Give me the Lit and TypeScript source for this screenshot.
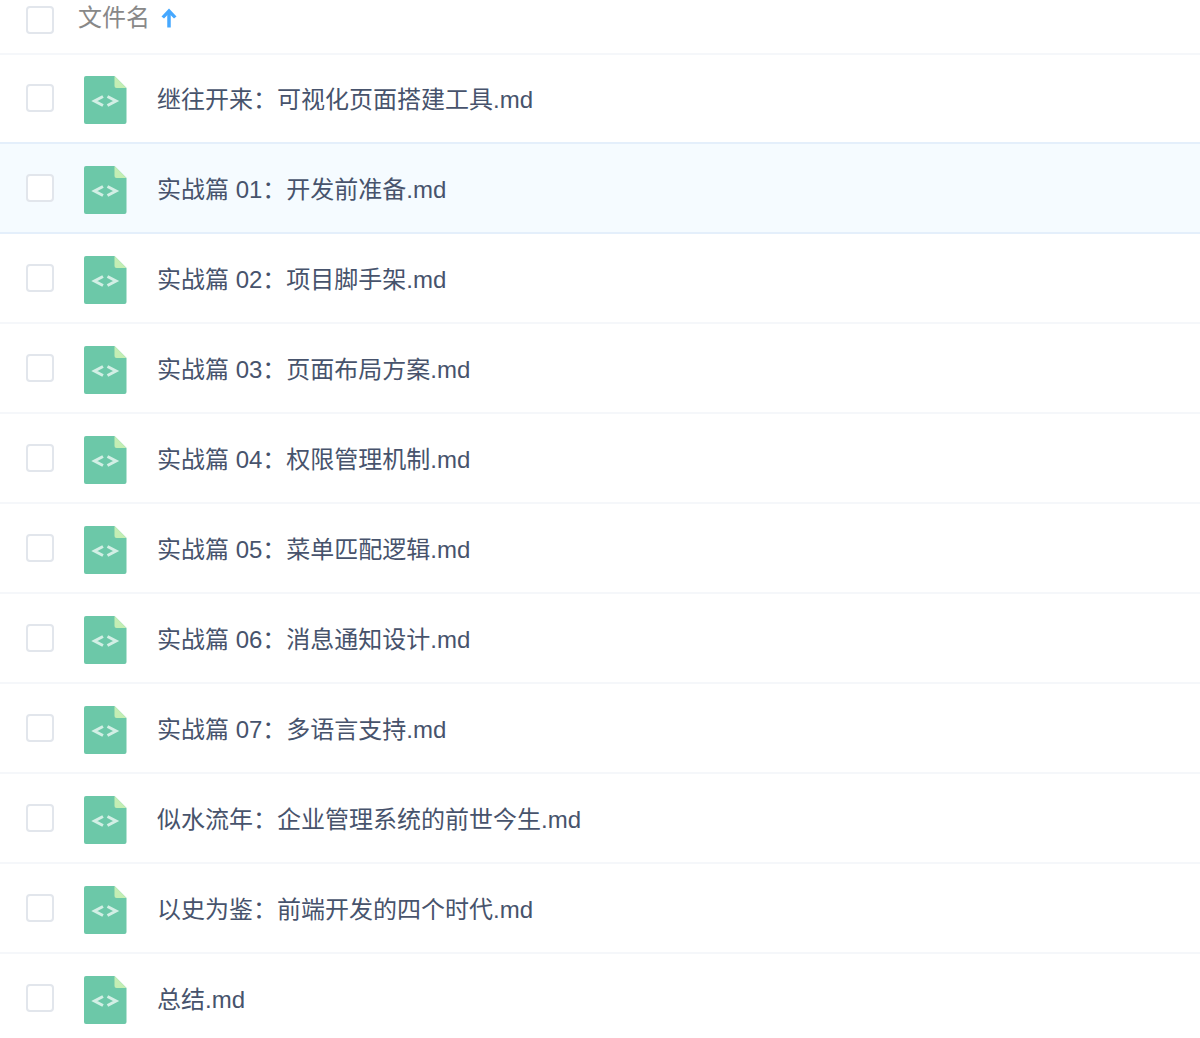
import { LitElement, html, css, svg } from "lit";
import { customElement } from "lit/decorators.js";

const FILES = [
  "继往开来：可视化页面搭建工具.md",
  "实战篇 01：开发前准备.md",
  "实战篇 02：项目脚手架.md",
  "实战篇 03：页面布局方案.md",
  "实战篇 04：权限管理机制.md",
  "实战篇 05：菜单匹配逻辑.md",
  "实战篇 06：消息通知设计.md",
  "实战篇 07：多语言支持.md",
  "似水流年：企业管理系统的前世今生.md",
  "以史为鉴：前端开发的四个时代.md",
  "总结.md",
];

const fileIcon = svg`<svg class="icon" width="43" height="48" viewBox="0 0 43 48">
  <path d="M2 0H30.500L42.500 12V46a2 2 0 0 1-2 2H2a2 2 0 0 1-2-2V2a2 2 0 0 1 2-2Z" fill="#6cc8a8"/>
  <path d="M30.500 0L42.500 12H32.500a2 2 0 0 1-2-2Z" fill="#c4eeb4"/>
  <path d="M19 20.500L10.500 25l8.500 4.500M23.500 20.500L32 25l-8.500 4.500" fill="none" stroke="#d3efe5" stroke-width="3"/>
</svg>`;

@customElement("app-root")
export class AppRoot extends LitElement {
  static styles = css`
    :host {
      display: block;
      width: 1200px;
      height: 1038px;
      overflow: hidden;
      background: #fff;
      font-family: "Liberation Sans", "Noto Sans CJK SC", sans-serif;
    }
    .header {
      display: flex;
      align-items: center;
      box-sizing: border-box;
      height: 55px;
      padding: 0 0 13px 26px;
      border-bottom: 2px solid #f5f7fa;
      color: #888;
      font-size: 24px;
    }
    .header .name {
      margin: 0 0 4px 24px;
      line-height: 36px;
    }
    .arrow {
      display: block;
      margin: 0 0 5px 11px;
    }
    .row {
      display: flex;
      align-items: center;
      box-sizing: border-box;
      height: 90px;
      padding: 4px 0 0 26px;
      border-bottom: 2px solid #f5f7fa;
      color: #47536c;
      font-size: 24px;
    }
    .row.first {
      height: 87px;
      padding-top: 3px;
      border-bottom: none;
    }
    .row.hl {
      height: 92px;
      background: #f5fbff;
      border-top: 2px solid #e4effb;
      border-bottom: 2px solid #e4effb;
    }
    .row.last {
      padding-bottom: 2px;
      border-bottom: none;
    }
    .check {
      box-sizing: border-box;
      flex: none;
      width: 28px;
      height: 28px;
      border: 2px solid #e2e6ec;
      border-radius: 4px;
      background: #fff;
    }
    .row .check {
      margin-bottom: 4px;
    }
    .row .icon {
      display: block;
      flex: none;
      margin-left: 30px;
    }
    .row .label {
      margin-left: 30px;
      white-space: pre;
      line-height: 36px;
    }
  `;

  render() {
    return html`
      <div class="header">
        <span class="check"></span>
        <span class="name">文件名</span>
        <svg class="arrow" width="16" height="20" viewBox="0 0 16 20">
          <path d="M8 3V19.500" fill="none" stroke="#46a8ff" stroke-width="3.500"/>
          <path d="M8 .5L15.500 8.500L13 10.500L8 5.500L3 10.500L.5 8.500Z" fill="#46a8ff"/>
        </svg>
      </div>
      ${FILES.map((name, i) => {
        const cls = ["row", i === 0 ? "first" : "", i === 1 ? "hl" : "", i === FILES.length - 1 ? "last" : ""].join(" ");
        return html`<div class=${cls}>
          <span class="check"></span>
          ${fileIcon}
          <span class="label">${name}</span>
        </div>`;
      })}
    `;
  }
}
